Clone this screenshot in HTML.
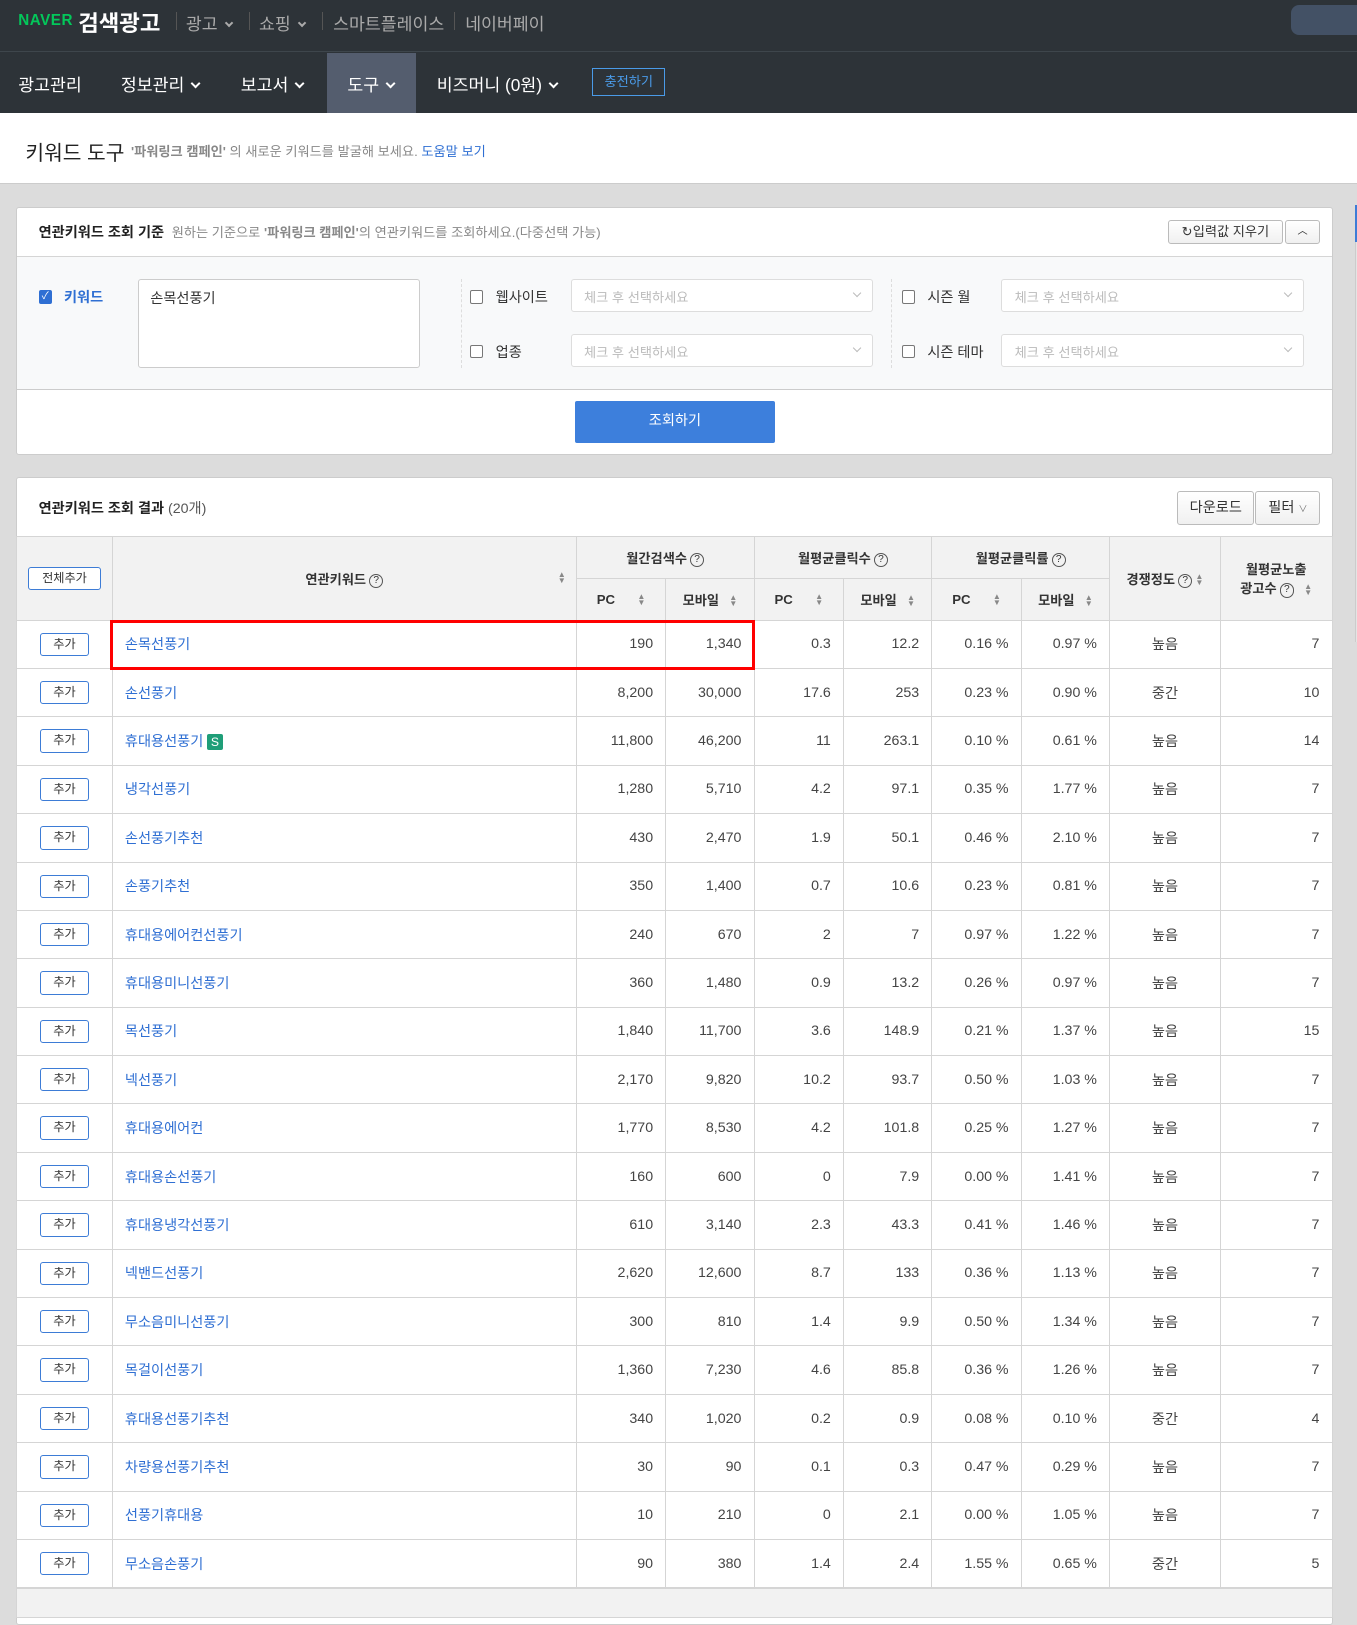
<!DOCTYPE html>
<html><head><meta charset="utf-8">
<style>
*{box-sizing:border-box;margin:0;padding:0}
body{width:1357px;height:1593px;overflow:hidden;background:#dcdcdc;font-family:"Liberation Sans","Noto Sans CJK KR",sans-serif;font-size:14px;color:#333;position:relative}
#w{position:absolute;left:0;top:0;width:1336px;height:1570px;zoom:1.0157}
.top{position:absolute;left:0;top:0;width:1340px;height:111px;background:#2d3338}
.r1{position:absolute;top:0;left:0;height:51px;width:100%;border-bottom:1px solid #3e464c}
.abs{position:absolute;white-space:nowrap}
.sep{position:absolute;top:12px;width:1px;height:18px;background:#555}
.nav{color:#fff;font-size:17px;top:70px}
.chev{display:inline-block;width:7px;height:7px;border-right:2px solid currentColor;border-bottom:2px solid currentColor;transform:rotate(45deg);margin:0 0 4px 8px}
.title{position:absolute;left:0;top:111px;width:1340px;height:70px;background:#fff;border-bottom:1px solid #ccc}
.box{position:absolute;left:16px;width:1296px;background:#fff;border:1px solid #ccc;border-radius:3px}
.btn{position:absolute;border:1px solid #bbb;border-radius:3px;background:linear-gradient(#fff,#f0f0f0);font-size:13px;color:#333;text-align:center}
.sel{position:absolute;width:298px;height:32px;border:1px solid #ddd;border-radius:3px;background:#fff;color:#bbb;font-size:13px;padding:7px 12px}
.sel:after{content:"";position:absolute;right:12px;top:10px;width:5px;height:5px;border-right:1px solid #bbb;border-bottom:1px solid #bbb;transform:rotate(45deg)}
.cb{position:absolute;width:13px;height:13px;border:1px solid #777;border-radius:2px;background:#fff}
table{position:absolute;left:16px;top:528px;border-collapse:collapse;table-layout:fixed;width:1296px;background:#fff}
td,th{border:1px solid #d5d5d5;height:47.65px;font-weight:normal;font-size:14px}
th{background:#f2f2f2;font-size:13px;color:#333;font-weight:bold;height:41px}
td{text-align:right;padding-right:12px;color:#444}
td.c{text-align:center;padding:0}
td.k{text-align:left;padding-left:12px;color:#2f6fd3}
.add{display:inline-block;width:48px;height:23px;border:1px solid #3d7cd6;border-radius:3px;font-size:12px;line-height:21px;color:#333;background:#fff}
.q{display:inline-block;width:14px;height:14px;border:1px solid #555;border-radius:50%;font-size:10px;line-height:12px;text-align:center;font-weight:normal;margin-left:3px;vertical-align:1px}
.so{display:inline-block;font-size:8px;color:#888;line-height:6px;vertical-align:middle;margin-left:10px}
</style></head><body>
<div id="w">
<div class="top">
 <div class="r1">
  <span class="abs" style="left:18px;top:12px;color:#03c75a;font-weight:bold;font-size:15px;letter-spacing:0.5px">NAVER</span>
  <span class="abs" style="left:77px;top:6px;color:#fff;font-size:22px;font-weight:bold">검색광고</span>
  <div class="sep" style="left:173px"></div>
  <span class="abs" style="left:183px;top:10px;color:#aaa;font-size:17px">광고<span class="chev" style="width:6px;height:6px"></span></span>
  <div class="sep" style="left:245px"></div>
  <span class="abs" style="left:255px;top:10px;color:#aaa;font-size:17px">쇼핑<span class="chev" style="width:6px;height:6px"></span></span>
  <div class="sep" style="left:317px"></div>
  <span class="abs" style="left:328px;top:10px;color:#aaa;font-size:17px">스마트플레이스</span>
  <div class="sep" style="left:447px"></div>
  <span class="abs" style="left:458px;top:10px;color:#aaa;font-size:17px">네이버페이</span>
  <div class="abs" style="left:1271px;top:5px;width:90px;height:29px;background:#435165;border-radius:8px"></div>
 </div>
 <div class="abs" style="left:322px;top:52px;width:88px;height:59px;background:#545d6e"></div>
 <span class="abs nav" style="left:18px">광고관리</span>
 <span class="abs nav" style="left:119px">정보관리<span class="chev"></span></span>
 <span class="abs nav" style="left:237px">보고서<span class="chev"></span></span>
 <span class="abs nav" style="left:342px">도구<span class="chev"></span></span>
 <span class="abs nav" style="left:430px">비즈머니 (0원)<span class="chev"></span></span>
 <div class="abs" style="left:583px;top:67px;width:72px;height:28px;border:1px solid #4a9be8;color:#4a9be8;font-size:13px;text-align:center;line-height:26px">충전하기</div>
</div>
<div class="title">
 <span class="abs" style="left:25px;top:23px;font-size:20px;color:#222">키워드 도구</span>
 <span class="abs" style="left:129px;top:28px;font-size:13px;color:#888"><b>'파워링크 캠페인'</b> 의 새로운 키워드를 발굴해 보세요. <span style="color:#2f6fd3">도움말 보기</span></span>
</div>
<div class="box" style="top:204px;height:244px">
 <span class="abs" style="left:21px;top:14px;font-size:14px;font-weight:bold;color:#222">연관키워드 조회 기준 <span style="font-weight:normal;color:#888;font-size:13px">&nbsp;원하는 기준으로 <b>'파워링크 캠페인'</b>의 연관키워드를 조회하세요.(다중선택 가능)</span></span>
 <div class="btn" style="left:1133px;top:12px;width:113px;height:23px;line-height:21px">↻입력값 지우기</div>
 <div class="btn" style="left:1248px;top:12px;width:35px;height:23px;line-height:21px;font-size:10px">︿</div>
 <div class="abs" style="left:0;top:47px;width:1294px;height:132px;background:#f8f9fa;border-top:1px solid #d5d5d5;border-bottom:1px solid #ccc">
  <div class="cb" style="left:21px;top:33px;background:#2f6fd3;border-color:#2f6fd3;color:#fff;font-size:10px;line-height:11px;text-align:center">✓</div>
  <span class="abs" style="left:46px;top:30px;color:#2f6fd3;font-weight:bold">키워드</span>
  <div class="abs" style="left:119px;top:22px;width:278px;height:87px;background:#fff;border:1px solid #ccc;border-radius:3px;padding:8px 11px;color:#333">손목선풍기</div>
  <div class="abs" style="left:437px;top:22px;height:87px;border-left:1px dashed #ddd"></div>
  <div class="abs" style="left:860px;top:22px;height:87px;border-left:1px dashed #ddd"></div>
  <div class="cb" style="left:446px;top:33px"></div><span class="abs" style="left:471px;top:30px">웹사이트</span>
  <div class="cb" style="left:446px;top:87px"></div><span class="abs" style="left:471px;top:84px">업종</span>
  <div class="sel" style="left:545px;top:22px">체크 후 선택하세요</div>
  <div class="sel" style="left:545px;top:76px">체크 후 선택하세요</div>
  <div class="cb" style="left:871px;top:33px"></div><span class="abs" style="left:896px;top:30px">시즌 월</span>
  <div class="cb" style="left:871px;top:87px"></div><span class="abs" style="left:896px;top:84px">시즌 테마</span>
  <div class="sel" style="left:969px;top:22px">체크 후 선택하세요</div>
  <div class="sel" style="left:969px;top:76px">체크 후 선택하세요</div>
 </div>
 <div class="abs" style="left:549px;top:190px;width:197px;height:41px;background:#3d7fdc;border-radius:2px;color:#fff;text-align:center;line-height:41px;font-size:14px">조회하기</div>
</div>
<div class="box" style="top:470px;height:1130px">
 <span class="abs" style="left:21px;top:19px;font-weight:bold;color:#222">연관키워드 조회 결과 <span style="font-weight:normal;color:#555">(20개)</span></span>
 <div class="btn" style="left:1142px;top:12px;width:76px;height:34px;line-height:32px;font-size:14px">다운로드</div>
 <div class="btn" style="left:1219px;top:12px;width:64px;height:34px;line-height:32px;font-size:14px">필터 <span style="font-size:9px;color:#777">∨</span></div>
</div>
<table>
<colgroup><col style="width:94px"><col style="width:457px"><col style="width:88px"><col style="width:87px"><col style="width:88px"><col style="width:87px"><col style="width:88px"><col style="width:87px"><col style="width:109px"><col style="width:110px"></colgroup>
<tr><th rowspan="2"><span class="add" style="width:72px;font-weight:normal">전체추가</span></th><th rowspan="2" style="position:relative">연관키워드<span class="q">?</span><span class="so" style="position:absolute;right:10px;top:34px">▲<br>▼</span></th><th colspan="2">월간검색수<span class="q">?</span></th><th colspan="2">월평균클릭수<span class="q">?</span></th><th colspan="2">월평균클릭률<span class="q">?</span></th><th rowspan="2">경쟁정도<span class="q">?</span><span class="so" style="margin-left:3px">▲<br>▼</span></th><th rowspan="2">월평균노출<br>광고수<span class="q">?</span><span class="so">▲<br>▼</span></th></tr>
<tr><th>PC<span class="so" style="margin-left:22px">▲<br>▼</span></th><th>모바일<span class="so">▲<br>▼</span></th><th>PC<span class="so" style="margin-left:22px">▲<br>▼</span></th><th>모바일<span class="so">▲<br>▼</span></th><th>PC<span class="so" style="margin-left:22px">▲<br>▼</span></th><th>모바일<span class="so">▲<br>▼</span></th></tr>
<tr><td class="c"><span class="add">추가</span></td><td class="k">손목선풍기</td><td>190</td><td>1,340</td><td>0.3</td><td>12.2</td><td>0.16 %</td><td>0.97 %</td><td class="c">높음</td><td>7</td></tr>
<tr><td class="c"><span class="add">추가</span></td><td class="k">손선풍기</td><td>8,200</td><td>30,000</td><td>17.6</td><td>253</td><td>0.23 %</td><td>0.90 %</td><td class="c">중간</td><td>10</td></tr>
<tr><td class="c"><span class="add">추가</span></td><td class="k">휴대용선풍기 <span style="display:inline-block;width:15px;height:16px;background:#1f9e78;color:#fff;font-size:12px;text-align:center;line-height:16px;border-radius:2px">S</span></td><td>11,800</td><td>46,200</td><td>11</td><td>263.1</td><td>0.10 %</td><td>0.61 %</td><td class="c">높음</td><td>14</td></tr>
<tr><td class="c"><span class="add">추가</span></td><td class="k">냉각선풍기</td><td>1,280</td><td>5,710</td><td>4.2</td><td>97.1</td><td>0.35 %</td><td>1.77 %</td><td class="c">높음</td><td>7</td></tr>
<tr><td class="c"><span class="add">추가</span></td><td class="k">손선풍기추천</td><td>430</td><td>2,470</td><td>1.9</td><td>50.1</td><td>0.46 %</td><td>2.10 %</td><td class="c">높음</td><td>7</td></tr>
<tr><td class="c"><span class="add">추가</span></td><td class="k">손풍기추천</td><td>350</td><td>1,400</td><td>0.7</td><td>10.6</td><td>0.23 %</td><td>0.81 %</td><td class="c">높음</td><td>7</td></tr>
<tr><td class="c"><span class="add">추가</span></td><td class="k">휴대용에어컨선풍기</td><td>240</td><td>670</td><td>2</td><td>7</td><td>0.97 %</td><td>1.22 %</td><td class="c">높음</td><td>7</td></tr>
<tr><td class="c"><span class="add">추가</span></td><td class="k">휴대용미니선풍기</td><td>360</td><td>1,480</td><td>0.9</td><td>13.2</td><td>0.26 %</td><td>0.97 %</td><td class="c">높음</td><td>7</td></tr>
<tr><td class="c"><span class="add">추가</span></td><td class="k">목선풍기</td><td>1,840</td><td>11,700</td><td>3.6</td><td>148.9</td><td>0.21 %</td><td>1.37 %</td><td class="c">높음</td><td>15</td></tr>
<tr><td class="c"><span class="add">추가</span></td><td class="k">넥선풍기</td><td>2,170</td><td>9,820</td><td>10.2</td><td>93.7</td><td>0.50 %</td><td>1.03 %</td><td class="c">높음</td><td>7</td></tr>
<tr><td class="c"><span class="add">추가</span></td><td class="k">휴대용에어컨</td><td>1,770</td><td>8,530</td><td>4.2</td><td>101.8</td><td>0.25 %</td><td>1.27 %</td><td class="c">높음</td><td>7</td></tr>
<tr><td class="c"><span class="add">추가</span></td><td class="k">휴대용손선풍기</td><td>160</td><td>600</td><td>0</td><td>7.9</td><td>0.00 %</td><td>1.41 %</td><td class="c">높음</td><td>7</td></tr>
<tr><td class="c"><span class="add">추가</span></td><td class="k">휴대용냉각선풍기</td><td>610</td><td>3,140</td><td>2.3</td><td>43.3</td><td>0.41 %</td><td>1.46 %</td><td class="c">높음</td><td>7</td></tr>
<tr><td class="c"><span class="add">추가</span></td><td class="k">넥밴드선풍기</td><td>2,620</td><td>12,600</td><td>8.7</td><td>133</td><td>0.36 %</td><td>1.13 %</td><td class="c">높음</td><td>7</td></tr>
<tr><td class="c"><span class="add">추가</span></td><td class="k">무소음미니선풍기</td><td>300</td><td>810</td><td>1.4</td><td>9.9</td><td>0.50 %</td><td>1.34 %</td><td class="c">높음</td><td>7</td></tr>
<tr><td class="c"><span class="add">추가</span></td><td class="k">목걸이선풍기</td><td>1,360</td><td>7,230</td><td>4.6</td><td>85.8</td><td>0.36 %</td><td>1.26 %</td><td class="c">높음</td><td>7</td></tr>
<tr><td class="c"><span class="add">추가</span></td><td class="k">휴대용선풍기추천</td><td>340</td><td>1,020</td><td>0.2</td><td>0.9</td><td>0.08 %</td><td>0.10 %</td><td class="c">중간</td><td>4</td></tr>
<tr><td class="c"><span class="add">추가</span></td><td class="k">차량용선풍기추천</td><td>30</td><td>90</td><td>0.1</td><td>0.3</td><td>0.47 %</td><td>0.29 %</td><td class="c">높음</td><td>7</td></tr>
<tr><td class="c"><span class="add">추가</span></td><td class="k">선풍기휴대용</td><td>10</td><td>210</td><td>0</td><td>2.1</td><td>0.00 %</td><td>1.05 %</td><td class="c">높음</td><td>7</td></tr>
<tr><td class="c"><span class="add">추가</span></td><td class="k">무소음손풍기</td><td>90</td><td>380</td><td>1.4</td><td>2.4</td><td>1.55 %</td><td>0.65 %</td><td class="c">중간</td><td>5</td></tr>
</table>
<div class="abs" style="left:16px;top:1563px;width:1296px;height:30px;background:#f2f2f2;border:1px solid #d5d5d5"></div>
<div class="abs" style="left:108px;top:610px;width:635px;height:50px;border:3px solid #f00"></div>
<div class="abs" style="left:1334px;top:202px;width:23px;height:430px;border-left:1px solid #ccc;background:#e4e4e4"></div>
<div class="abs" style="left:1334px;top:202px;width:2px;height:36px;background:#3d7cd6"></div>
</div>
</body></html>
